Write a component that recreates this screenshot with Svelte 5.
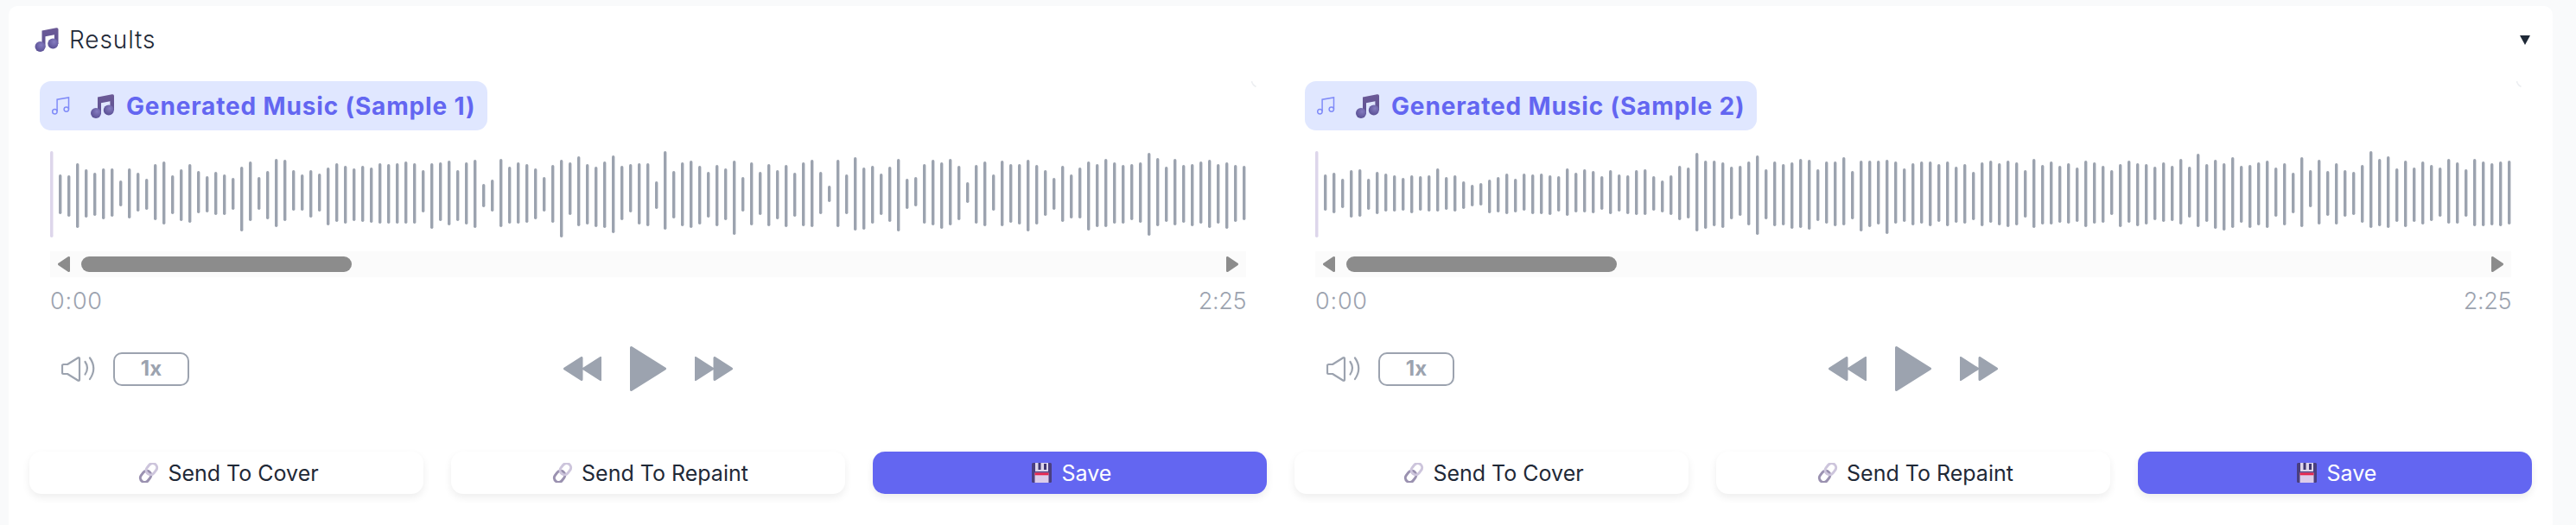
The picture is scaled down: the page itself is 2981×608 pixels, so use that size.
<script>
  // bar extents [top, bottom] in px inside the 100px wave box
  const wave1 = [
    [27,73],[28,76],[14,89],[21,77],[25,75],[20,79],[20,76],[34,64],[20,78],[25,70],
    [32,68],[15,80],[12,85],[28,73],[21,81],[15,83],[23,72],[29,71],[24,74],[27,74],
    [31,68],[18,93],[12,81],[30,68],[23,79],[9,88],[10,81],[22,69],[27,69],[22,77],
    [26,70],[19,86],[14,82],[17,84],[20,81],[17,82],[19,83],[14,84],[15,84],[14,84],
    [12,84],[14,84],[22,71],[14,90],[13,81],[11,86],[22,81],[13,85],[10,89],[38,65],
    [33,70],[9,88],[18,84],[13,84],[15,83],[20,79],[30,70],[16,83],[10,100],[13,74],
    [6,87],[15,85],[18,88],[12,89],[5,95],[17,80],[15,71],[14,85],[14,87],[35,67],
    [0,91],[23,78],[13,87],[11,89],[17,85],[24,77],[16,87],[20,80],[11,97],[30,70],
    [13,86],[24,74],[15,87],[22,79],[16,88],[25,76],[13,87],[10,88],[24,73],[40,59],
    [10,88],[27,73],[7,92],[19,91],[17,84],[26,74],[18,82],[9,93],[32,67],[30,64],
    [15,84],[10,86],[13,90],[9,86],[17,80],[36,60],[16,84],[12,87],[27,69],[11,87],
    [15,83],[15,85],[10,93],[16,85],[22,75],[31,68],[17,82],[27,78],[19,78],[12,92],
    [15,88],[9,88],[13,84],[16,84],[15,80],[13,83],[2,98],[8,87],[18,82],[9,86],
    [16,83],[15,87],[12,84],[10,89],[15,84],[13,90],[16,82],[17,80]
  ];
  const wave2 = [
    [27,69],[25,72],[32,66],[22,77],[21,76],[32,68],[24,73],[26,70],[28,70],[31,69],
    [28,72],[29,69],[28,70],[20,70],[30,68],[28,70],[35,67],[39,64],[37,63],[33,72],
    [30,71],[26,73],[32,71],[26,69],[27,73],[26,73],[28,74],[29,70],[20,75],[25,71],
    [21,71],[23,72],[29,68],[22,73],[27,70],[28,73],[22,74],[21,74],[29,69],[34,71],
    [28,74],[17,80],[19,78],[2,93],[11,90],[11,87],[13,89],[18,79],[17,75],[12,86],
    [5,97],[21,79],[12,87],[15,86],[13,90],[9,89],[10,91],[21,81],[12,84],[12,87],
    [7,86],[23,79],[11,93],[11,88],[11,85],[10,96],[12,84],[20,82],[14,86],[12,84],
    [12,87],[15,82],[12,87],[18,83],[15,84],[24,80],[13,87],[11,83],[14,86],[11,88],
    [13,86],[22,77],[9,89],[16,85],[12,85],[17,83],[14,84],[19,82],[11,88],[13,84],
    [17,83],[22,74],[15,88],[11,83],[14,87],[15,85],[18,80],[13,82],[17,81],[9,85],
    [18,77],[3,88],[15,82],[10,90],[14,92],[7,89],[17,83],[16,89],[13,86],[11,89],
    [19,76],[14,86],[25,72],[7,88],[22,65],[10,85],[23,75],[14,85],[22,76],[24,74],
    [16,83],[0,89],[9,87],[6,89],[20,82],[11,88],[19,82],[12,85],[16,81],[19,76],
    [9,84],[13,84],[21,76],[9,87],[12,87],[14,86],[12,87],[11,85]
  ];
  const samples = [
    { title: 'Generated Music (Sample 1)', bars: wave1 },
    { title: 'Generated Music (Sample 2)', bars: wave2 }
  ];
</script>

{#snippet noteEmoji(cls)}
  <svg class={cls} viewBox="0 0 27 28">
    <path d="M8 3.6 24.6.3Q27-.1 27 2v17h-4.6V8.2L12 10.3V23H8Z" fill="url(#noteStem)" />
    <circle cx="6" cy="22" r="6" fill="url(#noteHead)" />
    <circle cx="20.8" cy="18.4" r="6" fill="url(#noteHead)" />
  </svg>
{/snippet}

{#snippet linkEmoji()}
  <svg class="emoji" viewBox="0 0 26 23">
    <g fill="none" transform="rotate(-52 13 11.5)">
      <rect x="0.5" y="6.500" width="14" height="10" rx="5" stroke="#9a91b0" stroke-width="3" />
      <rect x="11.500" y="6.500" width="14" height="10" rx="5" stroke="#cdc5dc" stroke-width="3" />
    </g>
  </svg>
{/snippet}

<svg class="defs" aria-hidden="true">
  <defs>
    <linearGradient id="noteStem" x1="0" y1="0" x2="0" y2="1">
      <stop offset="0" stop-color="#6c5a96" />
      <stop offset="1" stop-color="#5d5194" />
    </linearGradient>
    <radialGradient id="noteHead" cx="0.6" cy="0.35" r="0.75">
      <stop offset="0" stop-color="#857cc0" />
      <stop offset="1" stop-color="#544a8e" />
    </radialGradient>
  </defs>
</svg>

<div class="page">
  <section class="card">
    <header>
      <div class="heading">
        {@render noteEmoji('note-title')}
        <span>Results</span>
      </div>
      <span class="caret"></span>
    </header>

    <div class="columns">
      {#each samples as sample}
        <div class="column">
          <svg class="corner" viewBox="0 0 6 7"><path d="M.5 0Q1 4 5.5 6.5" fill="none" stroke="#eceef1" stroke-width="1.6" /></svg>
          <div class="badge">
            <svg class="note-outline" viewBox="0 0 21 21" fill="none" stroke="#818cf8" stroke-width="1.5">
              <circle cx="3.4" cy="17.2" r="2.7" />
              <circle cx="16.8" cy="14.6" r="2.7" />
              <path d="M6.1 17V3.2L19.5.9v13.6" />
            </svg>
            {@render noteEmoji('note-badge')}
            <span>{sample.title}</span>
          </div>

          <div class="player">
            <svg class="wave" viewBox="0 0 1384 100">
              <rect class="cursor" x="0" y="0" width="3.5" height="100" rx="1.75" />
              {#each sample.bars as [top, bottom], i}
                <rect x={10 + i * 10} y={top} width="3.4" height={bottom - top} rx="1.7" />
              {/each}
            </svg>

            <div class="scrollbar">
              <svg class="arrow" viewBox="0 0 14 18"><path d="M12.6 1.500 1.500 9l11.100 7.500Z" /></svg>
              <div class="thumb"></div>
              <svg class="arrow" viewBox="0 0 14 18"><path d="M1.400 1.500 12.500 9 1.400 16.500Z" /></svg>
            </div>

            <div class="times">
              <span>0:00</span>
              <span class="total">2:25</span>
            </div>

            <div class="controls">
              <div class="left">
                <svg class="speaker" viewBox="0 0 39 29" fill="none" stroke="#9ca3af" stroke-width="2.2" stroke-linecap="round" stroke-linejoin="round">
                  <path d="M2.5 9H7L19.5 1.2Q21 .8 21 2.5v24q0 1.7-1.5 1.3L7 20H2.5Q1 20 1 18.500V10.500Q1 9 2.500 9Z" />
                  <path d="M27.500 6Q32.500 13 27.500 20.500" />
                  <path d="M33 1.500Q41.500 13.500 33 26" />
                </svg>
                <div class="speed">1x</div>
              </div>

              <div class="transport">
                <svg class="skip" viewBox="0 0 44 28"><path d="M21 1.500V26.500L1.500 14ZM43 1.500V26.500L23.500 14Z" /></svg>
                <svg class="play" viewBox="0 0 42 52"><path d="M1.500 1.500 40.500 26 1.500 50.500Z" /></svg>
                <svg class="skip" viewBox="0 0 44 28"><path d="M1 1.500V26.500L20.500 14ZM23 1.500V26.500L42.500 14Z" /></svg>
              </div>
              <div></div>
            </div>
          </div>

          <div class="actions">
            <button>{@render linkEmoji()}<span>Send To Cover</span></button>
            <button>{@render linkEmoji()}<span>Send To Repaint</span></button>
            <button class="primary">
              <svg class="emoji save" viewBox="0 0 23 23">
                <path d="M0 1.500Q0 0 1.500 0h20Q23 0 23 1.500v20q0 1.500-1.500 1.500h-20Q0 23 0 21.500Z" fill="#4a3f7f" />
                <rect x="4" y="0" width="15" height="10" fill="#ded6ea" />
                <rect x="7.500" y="0" width="3" height="8" fill="#3f3672" />
                <rect x="14" y="1" width="3" height="7" fill="#3f3672" />
                <rect x="3.500" y="11.500" width="16" height="11.500" fill="#dccdea" />
                <rect x="3.500" y="11.500" width="16" height="2.800" fill="#e5264e" />
              </svg>
              <span>Save</span>
            </button>
          </div>
        </div>
      {/each}
    </div>
  </section>
</div>

<style>
  :global(body) {
    margin: 0;
    background: #f9fafb;
  }

  .defs {
    position: absolute;
    width: 0;
    height: 0;
  }

  .page {
    height: 608px;
    box-sizing: border-box;
    padding: 7px 27px 0 10px;
    overflow: hidden;
    font-family: Inter, 'Liberation Sans', sans-serif;
    color: #1f2937;
  }

  .card {
    height: 100%;
    box-sizing: border-box;
    padding: 25px 24px 0;
    background: #fff;
    border-radius: 10px 10px 0 0;
  }

  header {
    display: flex;
    justify-content: space-between;
    align-items: center;
    height: 28px;
    padding: 0 2px 0 6px;
  }

  .heading {
    display: flex;
    align-items: center;
    gap: 12px;
    font-size: 28px;
    font-weight: 300;
    letter-spacing: 0.9px;
  }

  .note-title {
    width: 28px;
    height: 28px;
  }

  .caret {
    width: 0;
    height: 0;
    border-left: 6px solid transparent;
    border-right: 6px solid transparent;
    border-top: 11px solid #1f2937;
  }

  .columns {
    display: grid;
    grid-template-columns: 1fr 1fr;
    gap: 32px;
    margin-top: 34px;
  }

  .column {
    position: relative;
  }

  .corner {
    position: absolute;
    top: 0;
    right: 12px;
    width: 6px;
    height: 7px;
  }

  .badge {
    display: inline-flex;
    align-items: center;
    height: 57px;
    margin-left: 12px;
    padding: 0 14px;
    background: #e0e7ff;
    border-radius: 13px;
    color: #6366f1;
    font-size: 28px;
    font-weight: 700;
    letter-spacing: 0.85px;
  }

  .note-outline {
    width: 21px;
    height: 21px;
    margin-right: 24px;
  }

  .note-badge {
    width: 27px;
    height: 28px;
    margin-right: 14px;
  }

  .player {
    margin: 24px 24px 0;
  }

  .wave {
    display: block;
    width: 100%;
    height: 100px;
    fill: #9ca3af;
  }

  .cursor {
    fill: #ddd6eb;
  }

  .scrollbar {
    display: flex;
    align-items: center;
    height: 30px;
    margin-top: 16px;
    padding: 0 9px;
    background: #fbfbfb;
  }

  .arrow {
    width: 14px;
    height: 18px;
    fill: #8c8c8c;
    stroke: #8c8c8c;
    stroke-width: 3;
    stroke-linejoin: round;
  }

  .thumb {
    width: 313px;
    height: 18px;
    margin: 0 auto 0 13px;
    background: #8c8c8c;
    border-radius: 9px;
  }

  .times {
    display: flex;
    justify-content: space-between;
    margin-top: 11px;
    color: #9ca3af;
    font-size: 27px;
    font-weight: 300;
    letter-spacing: 0.8px;
    line-height: 33px;
  }

  .total {
    letter-spacing: -0.4px;
  }

  .controls {
    display: grid;
    grid-template-columns: 1fr auto 1fr;
    align-items: center;
    margin-top: 36px;
  }

  .left {
    display: flex;
    align-items: center;
    gap: 21px;
    padding-left: 13px;
  }

  .speaker {
    width: 39px;
    height: 29px;
  }

  .speed {
    width: 88px;
    height: 39px;
    box-sizing: border-box;
    border: 2.5px solid #9ca3af;
    border-radius: 10px;
    color: #9ca3af;
    font-size: 24px;
    font-weight: 700;
    line-height: 34px;
    text-align: center;
  }

  .transport {
    display: flex;
    align-items: center;
    gap: 33px;
  }

  .transport svg {
    fill: #9ca3af;
    stroke: #9ca3af;
    stroke-width: 3;
    stroke-linejoin: round;
  }

  .skip {
    width: 44px;
    height: 28px;
  }

  .play {
    width: 42px;
    height: 52px;
  }

  .actions {
    display: grid;
    grid-template-columns: repeat(3, 1fr);
    gap: 32px;
    margin-top: 70px;
  }

  button {
    display: flex;
    align-items: center;
    justify-content: center;
    gap: 9px;
    height: 49px;
    padding: 0 0 0 4px;
    border: 0;
    background: #fff;
    border-radius: 14px;
    box-shadow: 0 4px 10px rgba(0, 0, 0, 0.07);
    color: #1f2937;
    font: 400 25px Inter, 'Liberation Sans', sans-serif;
  }

  .primary {
    gap: 12px;
    background: #6366f1;
    color: #fff;
  }

  .emoji {
    width: 26px;
    height: 23px;
  }

  .save {
    width: 23px;
  }
</style>
